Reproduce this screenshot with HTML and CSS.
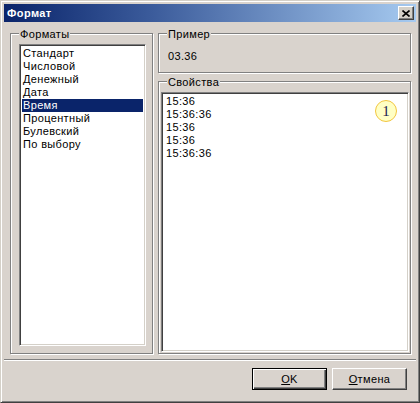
FILE: index.html
```html
<!DOCTYPE html>
<html lang="ru">
<head>
<meta charset="utf-8">
<title>Формат</title>
<link rel="stylesheet" href="styles.css">
</head>
<body>
<div class="window">
  <div class="titlebar">
    <span class="title">Формат</span>
    <button class="close" type="button" aria-label="Закрыть">
      <svg width="8" height="7" viewBox="0 0 8 7"><path d="M0.5 0.5 L7.5 6.5 M7.5 0.5 L0.5 6.5" stroke="#000" stroke-width="1.6" fill="none"/></svg>
    </button>
  </div>
  <div class="main">
    <div class="group group-formats">
      <span class="group-label">Форматы</span>
      <ul class="listbox list-formats">
        <li>Стандарт</li>
        <li>Числовой</li>
        <li>Денежный</li>
        <li>Дата</li>
        <li class="selected">Время</li>
        <li>Процентный</li>
        <li>Булевский</li>
        <li>По выбору</li>
      </ul>
    </div>
    <div class="right-col">
      <div class="group group-sample">
        <span class="group-label">Пример</span>
        <div class="sample">03.36</div>
      </div>
      <div class="group group-props">
        <span class="group-label">Свойства</span>
        <div class="listbox list-props">
          <ul class="props-items">
            <li>15:36</li>
            <li>15:36:36</li>
            <li>15:36</li>
            <li>15:36</li>
            <li>15:36:36</li>
          </ul>
          <span class="badge">1</span>
        </div>
      </div>
    </div>
  </div>
  <div class="separator"></div>
  <div class="buttons">
    <button class="btn btn-default" type="button"><u>O</u>K</button>
    <button class="btn" type="button"><u>О</u>тмена</button>
  </div>
</div>
</body>
</html>
```
FILE: styles.css
```css
* { box-sizing: border-box; }
html, body { margin: 0; padding: 0; }
body {
  width: 420px;
  height: 403px;
  font-family: "Liberation Sans", Arial, sans-serif;
  font-size: 11px;
  letter-spacing: 0.35px;
  color: #000;
  background: #fff;
}
.window {
  width: 420px;
  height: 403px;
  background: #d9d3cd;
  border: 1px solid;
  border-color: #d4d0c8 #404040 #404040 #d4d0c8;
  box-shadow: inset 1px 1px #fff, inset -1px -1px #808080;
  padding: 3px;
  display: flex;
  flex-direction: column;
}
.titlebar {
  height: 18px;
  flex: none;
  display: flex;
  align-items: center;
  justify-content: space-between;
  padding: 0 2px 0 3px;
  background: linear-gradient(to right, #0a246a 0%, #3a5a9a 35%, #a6caf0 100%);
}
.title {
  color: #fff;
  font-weight: bold;
  font-size: 11px;
  letter-spacing: 0.4px;
}
.close {
  width: 16px;
  height: 14px;
  padding: 0;
  margin: 0;
  background: #d4d0c8;
  border: 1px solid;
  border-color: #fff #404040 #404040 #fff;
  box-shadow: inset -1px -1px #808080;
  display: flex;
  align-items: center;
  justify-content: center;
}
.close svg { display: block; }
.main {
  flex: none;
  height: 332px;
  padding: 11px 0 0 6px;
  display: grid;
  grid-template-columns: 143px 253px;
  column-gap: 5px;
}
.group {
  border: 1px solid #808080;
  box-shadow: inset 1px 1px #fff, 1px 1px #fff;
  display: flex;
  flex-direction: column;
  align-items: flex-start;
}
.group-label {
  margin: -6px 0 0 8px;
  padding: 0 1px;
  line-height: 13px;
  background: #d9d3cd;
}
.right-col {
  display: flex;
  flex-direction: column;
  gap: 8px;
}
.group-sample { height: 40px; flex: none; }
.group-props { flex: 1; }
.sample {
  margin: 9px 0 0 9px;
  line-height: 13px;
}
.listbox {
  background: #fff;
  border: 1px solid;
  border-color: #808080 #fff #fff #808080;
  box-shadow: inset 1px 1px #404040, inset -1px -1px #d4d0c8;
  padding: 2px;
  margin: 0;
  list-style: none;
  align-self: stretch;
}
.list-formats {
  margin: 3px 6px 7px 8px;
  flex: 1;
}
.list-formats li {
  line-height: 13px;
  padding-left: 1px;
}
.list-formats li.selected {
  background: #0a246a;
  color: #fff;
}
.list-props {
  margin: 3px 1px 1px 2px;
  flex: 1;
  position: relative;
}
.props-items {
  list-style: none;
  margin: 0;
  padding: 0;
}
.props-items li {
  line-height: 13px;
  padding-left: 2px;
}
.badge {
  position: absolute;
  top: 7px;
  right: 11px;
  width: 22px;
  height: 22px;
  border-radius: 50%;
  background: #ffffc4;
  border: 1.5px solid #f2c640;
  display: flex;
  align-items: center;
  justify-content: center;
  font-family: "Liberation Serif", "Times New Roman", serif;
  font-size: 15px;
  letter-spacing: 0;
  color: #1c1c50;
}
.separator {
  flex: none;
  margin-top: 5px;
  height: 2px;
  border-top: 1px solid #808080;
  border-bottom: 1px solid #fff;
}
.buttons {
  flex: none;
  display: flex;
  justify-content: flex-end;
  gap: 5px;
  padding: 7px 9px 0 0;
}
.btn {
  width: 75px;
  height: 22px;
  margin: 0;
  padding: 0;
  font-family: "Liberation Sans", Arial, sans-serif;
  font-size: 11px;
  letter-spacing: 0.35px;
  color: #000;
  background: #d9d3cd;
  border: 1px solid;
  border-color: #fff #404040 #404040 #fff;
  box-shadow: inset -1px -1px #808080;
}
.btn-default {
  border-color: #000;
  box-shadow: inset 1px 1px #fff, inset -1px -1px #404040, inset -2px -2px #808080;
}
.btn u { text-underline-offset: 1px; }
```
